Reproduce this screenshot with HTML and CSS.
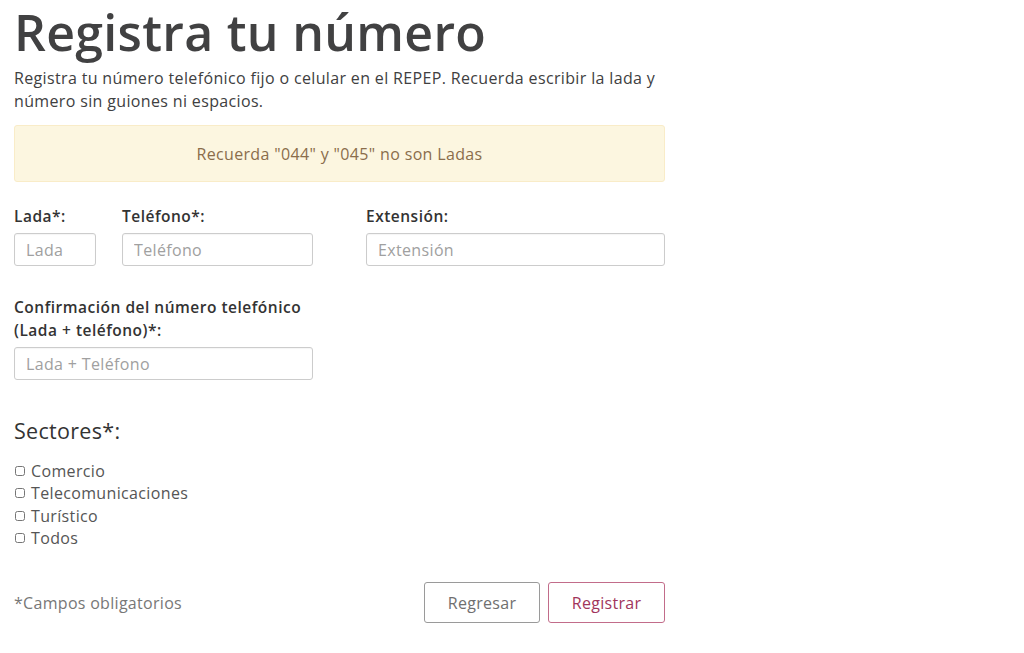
FILE: index.html
```html
<!DOCTYPE html>
<html lang="es">
<head>
<meta charset="utf-8">
<title>Registra tu número</title>
<link rel="stylesheet" href="styles.css">
</head>
<body>
<main class="page">
  <h1 class="title">Registra tu número</h1>
  <p class="intro">Registra tu número telefónico fijo o celular en el REPEP. Recuerda escribir la lada y número sin guiones ni espacios.</p>
  <div class="alert">Recuerda "044" y "045" no son Ladas</div>

  <div class="row">
    <div class="phone-group">
      <div class="field field-lada">
        <label class="label">Lada*:</label>
        <input class="input" type="text" placeholder="Lada">
      </div>
      <div class="field field-tel">
        <label class="label">Teléfono*:</label>
        <input class="input" type="text" placeholder="Teléfono">
      </div>
    </div>
    <div class="field field-ext">
      <label class="label">Extensión:</label>
      <input class="input" type="text" placeholder="Extensión">
    </div>
  </div>

  <div class="field field-confirm">
    <label class="label">Confirmación del número telefónico<br>(Lada + teléfono)*:</label>
    <input class="input" type="text" placeholder="Lada + Teléfono">
  </div>

  <h2 class="sectors-title">Sectores*:</h2>
  <ul class="sectors">
    <li><label><input type="checkbox" class="check"> Comercio</label></li>
    <li><label><input type="checkbox" class="check"> Telecomunicaciones</label></li>
    <li><label><input type="checkbox" class="check"> Turístico</label></li>
    <li><label><input type="checkbox" class="check"> Todos</label></li>
  </ul>

  <div class="footer">
    <span class="required">*Campos obligatorios</span>
    <div class="actions">
      <button class="btn btn-back" type="button">Regresar</button>
      <button class="btn btn-primary" type="button">Registrar</button>
    </div>
  </div>
</main>
</body>
</html>
```
FILE: styles.css
```css
* { box-sizing: border-box; }
html, body { margin: 0; padding: 0; background: #fff; }
body {
  font-family: "Open Sans", "Noto Sans", sans-serif;
  color: #404041;
}
.page {
  width: 651px;
  margin-left: 14px;
  padding-top: 2px;
}
.title {
  margin: 0;
  font-size: 50px;
  font-weight: 600;
  line-height: 60px;
  color: #414142;
  letter-spacing: 0.3px;
}
.intro {
  margin: 5px 0 0;
  font-size: 16px;
  line-height: 23px;
  letter-spacing: 0.35px;
  color: #404041;
}
.alert {
  margin-top: 12px;
  height: 57px;
  background: #fcf6e0;
  border: 1px solid #f9ecc8;
  border-radius: 3px;
  color: #8a6d4b;
  font-size: 16px;
  letter-spacing: 0.35px;
  display: flex;
  align-items: center;
  justify-content: center;
}
.row {
  margin-top: 23px;
  display: flex;
  gap: 53px;
}
.phone-group {
  display: flex;
  gap: 26px;
  width: 299px;
}
.field { display: flex; flex-direction: column; }
.field-lada { width: 82px; }
.field-tel { flex: 1; }
.field-ext { flex: 1; }
.label {
  font-size: 15.5px;
  font-weight: 600;
  line-height: 23px;
  letter-spacing: 0.5px;
  color: #333;
  margin-bottom: 5px;
}
.input {
  height: 33px;
  width: 100%;
  border: 1px solid #ccc;
  border-radius: 3px;
  padding: 0 11px;
  font-family: inherit;
  font-size: 16px;
  letter-spacing: 0.35px;
  color: #555;
  background: #fff;
  box-shadow: inset 0 1px 1px rgba(0,0,0,0.04);
}
.input::placeholder { color: #a0a0a0; }
.field-confirm {
  width: 299px;
  margin-top: 30px;
}
.field-confirm .label { margin-bottom: 5px; }
.sectors-title {
  margin: 38px 0 0;
  font-size: 21.5px;
  font-weight: 500;
  line-height: 26px;
  letter-spacing: 0.3px;
  color: #333;
}
.sectors {
  list-style: none;
  margin: 16px 0 0;
  padding: 0;
  font-size: 16px;
  line-height: 22.3px;
  letter-spacing: 0.35px;
  color: #555;
}
.sectors label { display: flex; align-items: center; gap: 6px; }
.check {
  margin: 0 0 0 1px;
  width: 10px;
  height: 10px;
}
.footer {
  margin-top: 33px;
  display: flex;
  align-items: center;
  justify-content: space-between;
}
.required { font-size: 16px; letter-spacing: 0.3px; color: #777; }
.actions { display: flex; gap: 8px; }
.btn {
  height: 41px;
  border-radius: 3px;
  background: #fff;
  font-family: inherit;
  font-size: 16px;
  letter-spacing: 0.3px;
  padding: 0;
}
.btn-back {
  width: 116px;
  border: 1px solid #9a9a9a;
  color: #6f6f6f;
}
.btn-primary {
  width: 117px;
  border: 1px solid #c26c8a;
  color: #a1355b;
}
```
